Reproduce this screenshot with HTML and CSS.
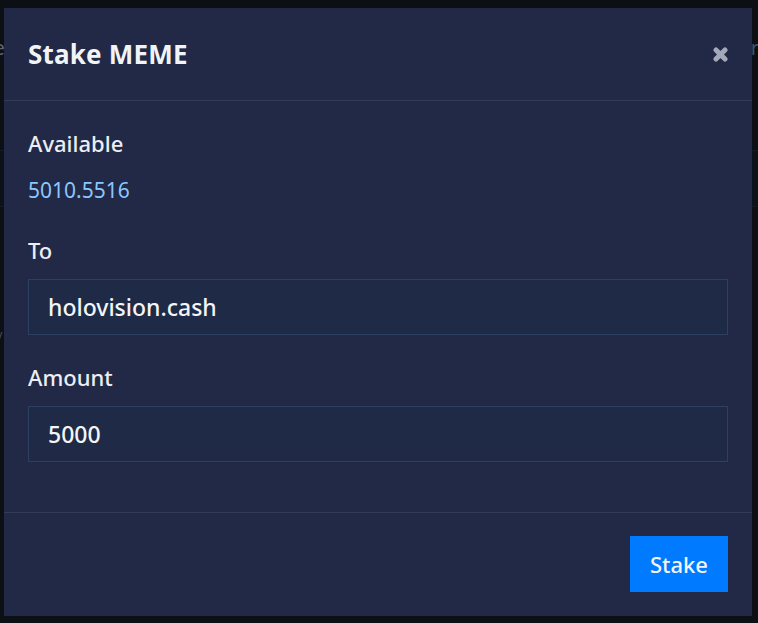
FILE: index.html
```html
<!DOCTYPE html>
<html lang="en">
<head>
    <meta charset="UTF-8" />
    <meta name="viewport" content="width=device-width, initial-scale=1.0" />
    <title>Stake MEME</title>
    <link rel="stylesheet" href="styles.css">
</head>
<body>
    <div class="page">
        <div class="page-top">
            <span class="page-left">Trade</span>
            <span class="page-right">Order</span>
        </div>
        <div class="page-band"></div>
        <div class="page-row">Stu</div>
        <div class="page-row small">/</div>
    </div>

    <div class="overlay">
        <div class="modal">
            <div class="modal-header">
                <h2>Stake MEME</h2>
                <button class="close" aria-label="Close">
                    <svg width="15" height="15" viewBox="0 0 15 15">
                        <path d="M3 3 L12 12 M12 3 L3 12" stroke="currentColor" stroke-width="5" stroke-linecap="round" fill="none"/>
                    </svg>
                </button>
            </div>

            <div class="modal-body">
                <div class="field">
                    <div class="label">Available</div>
                    <div class="balance">5010.5516</div>
                </div>
                <div class="field">
                    <div class="label">To</div>
                    <input class="input" type="text" value="holovision.cash" spellcheck="false">
                </div>
                <div class="field">
                    <div class="label">Amount</div>
                    <input class="input" type="text" value="5000" spellcheck="false">
                </div>
            </div>

            <div class="modal-footer">
                <button class="stake-btn">Stake</button>
            </div>
        </div>
    </div>
</body>
</html>
```

FILE: styles.css
```css
body {
    margin: 0;
    font-family: 'Noto Sans', sans-serif;
    background: #10131a;
    color: #eef0f6;
    height: 623px;
    overflow: hidden;
}

/* background page, mostly hidden behind the dialog */
.page {
    padding-top: 36px;
}

.page-top {
    display: flex;
    justify-content: space-between;
    font-size: 20px;
    line-height: 24px;
}

.page-left {
    margin-left: -48px;
    color: #8c93a0;
}

.page-right {
    margin-right: -1px;
    color: #5f7f98;
}

.page-band {
    margin-top: 90px;
    height: 55px;
    border-top: 1px solid #1d2533;
    border-bottom: 1px solid #1d2533;
    background: #111823;
}

.page-row {
    margin: 46px 0 0 -30px;
    font-size: 20px;
    color: #8c93a0;
}

.page-row.small {
    margin: 48px 0 0 -2px;
    font-size: 12px;
    color: #6c7380;
}

/* dialog */
.overlay {
    position: absolute;
    top: 0;
    left: 0;
    right: 0;
    bottom: 0;
    background: rgba(6, 8, 12, 0.35);
}

.modal {
    margin: 8px 0 0 4px;
    width: 748px;
    height: 608px;
    background: #212946;
    display: flex;
    flex-direction: column;
}

.modal-header {
    height: 92px;
    display: flex;
    align-items: center;
    justify-content: space-between;
    padding: 0 24px;
    border-bottom: 1px solid #323b55;
}

.modal-header h2 {
    margin: 0;
    font-size: 26px;
    font-weight: 700;
    color: #f2f3f7;
    letter-spacing: 0.2px;
}

.close {
    background: none;
    border: none;
    padding: 0;
    margin: 1px 0 0 0;
    color: #a3a9b8;
    display: flex;
    cursor: pointer;
}

.modal-body {
    flex: 1;
    padding: 27px 24px 0;
    display: flex;
    flex-direction: column;
    gap: 27px;
}

.field {
    display: flex;
    flex-direction: column;
}

.field:first-child {
    margin-bottom: 3px;
}

.label {
    font-size: 22px;
    line-height: 30px;
    font-weight: 500;
    color: #eceef4;
    margin-bottom: 14px;
}

.field:first-child .label {
    margin-bottom: 17px;
}

.balance {
    font-size: 21px;
    line-height: 30px;
    color: #8cc6ff;
}

.input {
    box-sizing: border-box;
    width: 100%;
    height: 56px;
    background: #1e2a46;
    border: 1px solid #2d4063;
    color: #f4f5f8;
    padding: 0 19px;
    font-family: inherit;
    font-size: 23px;
    font-weight: 500;
    outline: none;
}

.modal-footer {
    height: 104px;
    border-top: 1px solid #323b55;
    display: flex;
    justify-content: flex-end;
    align-items: flex-start;
    padding: 23px 24px 0;
    box-sizing: border-box;
}

.stake-btn {
    height: 56px;
    padding: 0 20px;
    background: #007bff;
    color: #f2f4f8;
    border: none;
    font-family: inherit;
    font-size: 22px;
    font-weight: 500;
    cursor: pointer;
}
```
